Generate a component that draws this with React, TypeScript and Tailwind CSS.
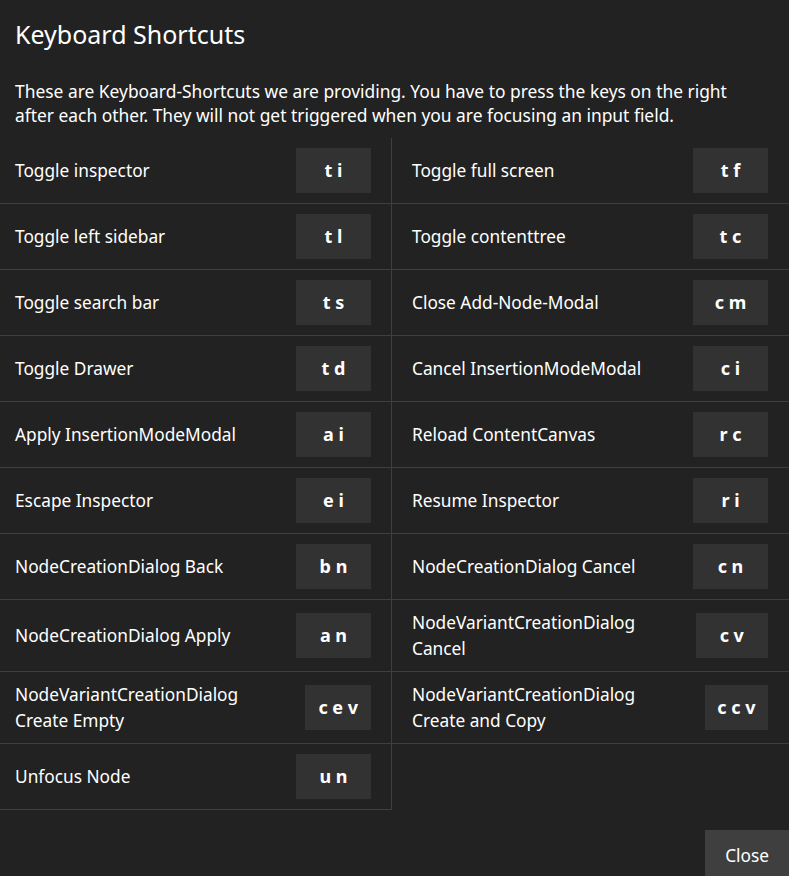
import React from "react";

const rows: [string, string, string, string][] = [
  ["Toggle inspector", "t i", "Toggle full screen", "t f"],
  ["Toggle left sidebar", "t l", "Toggle contenttree", "t c"],
  ["Toggle search bar", "t s", "Close Add-Node-Modal", "c m"],
  ["Toggle Drawer", "t d", "Cancel InsertionModeModal", "c i"],
  ["Apply InsertionModeModal", "a i", "Reload ContentCanvas", "r c"],
  ["Escape Inspector", "e i", "Resume Inspector", "r i"],
  ["NodeCreationDialog Back", "b n", "NodeCreationDialog Cancel", "c n"],
  ["NodeCreationDialog Apply", "a n", "NodeVariantCreationDialog Cancel", "c v"],
  ["NodeVariantCreationDialog Create Empty", "c e v", "NodeVariantCreationDialog Create and Copy", "c c v"],
  ["Unfocus Node", "u n", "", ""],
];

function Key({ k }: { k: string }) {
  return (
    <div className="w-[75px] h-[45px] px-3 flex items-center justify-center bg-[#323232] text-white font-bold text-[18px] whitespace-pre">
      {k}
    </div>
  );
}

export default function App() {
  return (
    <div
      className="w-[789px] h-[876px] overflow-hidden bg-[#222222] text-white"
      style={{ fontFamily: '"Noto Sans", "Open Sans", sans-serif' }}
    >
      <div className="pt-[16px]">
        <h1 className="px-[15px] text-[25px] leading-[36px] font-normal">Keyboard Shortcuts</h1>
        <p className="pl-[15px] pr-[30px] mt-[27px] text-[17.4px] leading-[24px]">
          These are Keyboard-Shortcuts we are providing. You have to press the keys on the right after each other. They will not get triggered when you are focusing an input field.
        </p>
        <div className="mt-[11px] grid grid-cols-[392px_1fr]">
          {rows.map(([l1, k1, l2, k2], i) => (
            <React.Fragment key={i}>
              <div className="flex items-center justify-between gap-4 border-r border-b border-[#3f3f3f] pl-[15px] pr-5 py-[10px]">
                <span className="text-[17.3px] leading-[25.6px]">{l1}</span>
                <Key k={k1} />
              </div>
              {l2 ? (
                <div className="flex items-center justify-between gap-4 border-b border-[#3f3f3f] pl-5 pr-[21px] py-[10px]">
                  <span className="text-[17.3px] leading-[25.6px]">{l2}</span>
                  <Key k={k2} />
                </div>
              ) : (
                <div />
              )}
            </React.Fragment>
          ))}
        </div>
        <div className="mt-[20px] flex justify-end">
          <button className="h-[52px] px-5 bg-[#3f3f3f] text-white text-[17.3px] leading-[24px]">Close</button>
        </div>
      </div>
    </div>
  );
}
